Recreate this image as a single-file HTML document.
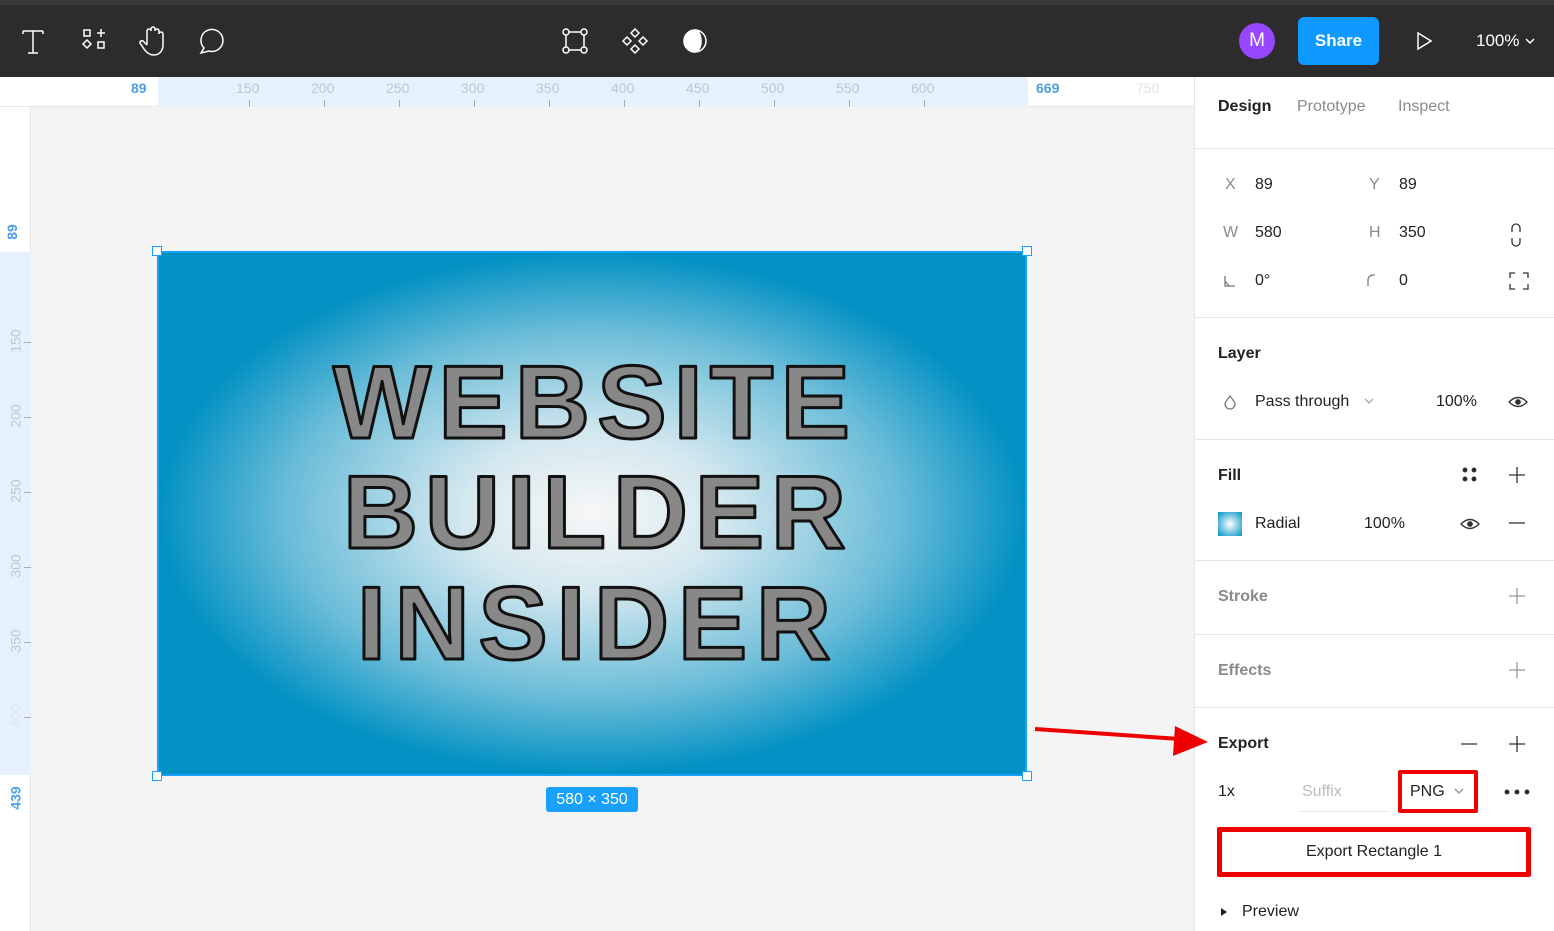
<!DOCTYPE html>
<html><head><meta charset="utf-8"><style>
*{margin:0;padding:0;box-sizing:border-box}
body{width:1554px;height:931px;overflow:hidden;position:relative;background:#f4f4f4;font-family:"Liberation Sans",sans-serif}
.a{position:absolute}
.t{position:absolute;font-size:16px;color:#222;white-space:nowrap;line-height:20px}
.g{color:#8a8a8a}
.sep{position:absolute;left:1194px;width:360px;height:1px;background:#e5e5e5}
.rl{position:absolute;font-size:14px;color:#c0c6cc;top:80px}
.tk{position:absolute;top:100px;width:1px;height:7px;background:#aab}
.vl{position:absolute;left:4px;font-size:14px;color:#c0c6cc;transform:rotate(-90deg);transform-origin:center}
.vt{position:absolute;left:24px;width:7px;height:1px;background:#aab}
</style></head><body>
<!-- top bar -->
<div class="a" style="left:0;top:0;width:1554px;height:77px;background:#2c2c2c"></div>
<div class="a" style="left:0;top:0;width:1554px;height:5px;background:#3a3a3a"></div>
<svg class="a" style="left:0;top:0" width="1554" height="77" fill="none" stroke="#fff" stroke-width="1.5">
<path d="M23 31h20M33 31v22M28 53h10M23 31v3M43 31v3"/>
<rect x="84" y="30" width="6" height="6"/><path d="M97 33h8M101 29v8"/><path d="M87 40l4 4-4 4-4-4z"/><rect x="98" y="42" width="6" height="6"/>
<path d="M147 45v-14a2 2 0 0 1 4 0v-2a2 2 0 0 1 4 0v2a2 2 0 0 1 4 0v3a2 2 0 0 1 4 0v11c0 6-4 10-9 10s-8-3-10-6l-4-6a2 2 0 0 1 3-2l4 4"/>
<path d="M201 53l3-5a11 11 0 1 1 5 3z"/>
<rect x="566" y="32" width="18" height="18"/><circle cx="566" cy="32" r="3" fill="#2c2c2c"/><circle cx="584" cy="32" r="3" fill="#2c2c2c"/><circle cx="566" cy="50" r="3" fill="#2c2c2c"/><circle cx="584" cy="50" r="3" fill="#2c2c2c"/>
<path d="M635 29l4 4-4 4-4-4zM627 37l4 4-4 4-4-4zM643 37l4 4-4 4-4-4zM635 45l4 4-4 4-4-4z"/>
<circle cx="695" cy="41" r="11"/><path d="M695 30A11 11 0 0 0 695 52A6 11 0 0 0 695 30z" fill="#fff"/>
<path d="M1418 33l13 8-13 8z"/><path d="M1526 39l4 4 4-4"/>
</svg>
<div class="a" style="left:1239px;top:23px;width:36px;height:36px;border-radius:50%;background:#9747ff;color:#fff;font-size:19px;text-align:center;line-height:36px">M</div>
<div class="a" style="left:1298px;top:17px;width:81px;height:48px;border-radius:6px;background:#0d99ff;color:#fff;font-size:17px;font-weight:bold;text-align:center;line-height:48px">Share</div>
<div class="t" style="left:1476px;top:31px;color:#fff;font-size:17px">100%</div>
<!-- rulers -->
<div class="a" style="left:0;top:77px;width:1194px;height:30px;background:#fff;border-bottom:1px solid #e5e5e5"></div>
<div class="a" style="left:158px;top:77px;width:870px;height:30px;background:#e5f2fd"></div>
<div class="a" style="left:0;top:107px;width:31px;height:824px;background:#fff;border-right:1px solid #e5e5e5"></div>
<div class="a" style="left:0;top:252px;width:31px;height:523px;background:#e5f2fd"></div>
<div class="rl" style="left:131px;color:#4a9fe6;font-weight:bold">89</div>
<div class="rl" style="left:236px">150</div><div class="rl" style="left:311px">200</div><div class="rl" style="left:386px">250</div><div class="rl" style="left:461px">300</div><div class="rl" style="left:536px">350</div><div class="rl" style="left:611px">400</div><div class="rl" style="left:686px">450</div><div class="rl" style="left:761px">500</div><div class="rl" style="left:836px">550</div><div class="rl" style="left:911px">600</div>
<div class="rl" style="left:1036px;color:#4a9fe6;font-weight:bold">669</div><div class="rl" style="left:1136px;color:#e0e4e8">750</div>
<div class="tk" style="left:249px"></div><div class="tk" style="left:324px"></div><div class="tk" style="left:399px"></div><div class="tk" style="left:474px"></div><div class="tk" style="left:549px"></div><div class="tk" style="left:624px"></div><div class="tk" style="left:699px"></div><div class="tk" style="left:774px"></div><div class="tk" style="left:849px"></div><div class="tk" style="left:924px"></div>
<div class="vl" style="top:224px;color:#4a9fe6;font-weight:bold">89</div>
<div class="vl" style="top:333px">150</div><div class="vl" style="top:408px">200</div><div class="vl" style="top:483px">250</div><div class="vl" style="top:558px">300</div><div class="vl" style="top:633px">350</div><div class="vl" style="top:708px;color:#e0e4e8">400</div>
<div class="vl" style="top:790px;color:#4a9fe6;font-weight:bold">439</div>
<div class="vt" style="top:342px"></div><div class="vt" style="top:417px"></div><div class="vt" style="top:492px"></div><div class="vt" style="top:567px"></div><div class="vt" style="top:642px"></div><div class="vt" style="top:717px"></div>
<!-- artwork -->
<div class="a" style="left:157px;top:251px;width:870px;height:525px;background:radial-gradient(ellipse 50% 50% at 50% 50%,#f7f7f7 0%,#d4e8ef 30%,#6cbdd8 70%,#0291c3 100%);border:2px solid #18a0fb"></div>
<svg class="a" style="left:157px;top:251px" width="870" height="525">
<g font-family="Liberation Sans,sans-serif" font-weight="bold" font-size="104" fill="#888" stroke="#111" stroke-width="3" stroke-linejoin="round">
<text x="176" y="187" textLength="517" lengthAdjust="spacing">WEBSITE</text>
<text x="186" y="297" textLength="503" lengthAdjust="spacing">BUILDER</text>
<text x="200" y="408" textLength="474" lengthAdjust="spacing">INSIDER</text>
</g></svg>
<div class="a" style="left:152px;top:246px;width:10px;height:10px;background:#fff;border:1.5px solid #18a0fb"></div>
<div class="a" style="left:1022px;top:246px;width:10px;height:10px;background:#fff;border:1.5px solid #18a0fb"></div>
<div class="a" style="left:152px;top:771px;width:10px;height:10px;background:#fff;border:1.5px solid #18a0fb"></div>
<div class="a" style="left:1022px;top:771px;width:10px;height:10px;background:#fff;border:1.5px solid #18a0fb"></div>
<div class="a" style="left:546px;top:787px;width:92px;height:25px;background:#18a0fb;border-radius:3px;color:#fff;font-size:16px;text-align:center;line-height:25px">580 × 350</div>
<!-- panel -->
<div class="a" style="left:1194px;top:77px;width:360px;height:854px;background:#fff;border-left:1px solid #e5e5e5"></div>
<div class="t" style="left:1218px;top:97px;font-weight:bold">Design</div>
<div class="t g" style="left:1297px;top:97px">Prototype</div>
<div class="t g" style="left:1398px;top:97px">Inspect</div>
<div class="sep" style="top:148px"></div>
<div class="t g" style="left:1225px;top:175px">X</div><div class="t" style="left:1255px;top:175px">89</div>
<div class="t g" style="left:1369px;top:175px">Y</div><div class="t" style="left:1399px;top:175px">89</div>
<div class="t g" style="left:1223px;top:223px">W</div><div class="t" style="left:1255px;top:223px">580</div>
<div class="t g" style="left:1369px;top:223px">H</div><div class="t" style="left:1399px;top:223px">350</div>
<div class="t" style="left:1255px;top:271px">0°</div><div class="t" style="left:1399px;top:271px">0</div>
<svg class="a" style="left:1194px;top:148px" width="360" height="783" fill="none" stroke="#333" stroke-width="1.3">
<path d="M318 84v-4a4 4 0 0 1 8 0v4M318 90v4a4 4 0 0 0 8 0v-4"/>
<path d="M316 130v-5h5M329 125h5v5M334 136v5h-5M321 141h-5v-5"/>
<path d="M31 128v10h10M31 133l4 5" stroke="#777"/>
<path d="M174 138v-6a5 5 0 0 1 5-5h2" stroke="#777"/>
<path d="M36 248c-3 4-5 6-5 8a5 5 0 0 0 10 0c0-2-2-4-5-8z" stroke="#777"/>
<path d="M171 251l4 4 4-4" stroke="#aaa"/>
<path d="M315 254q9-9 18 0q-9 9-18 0z"/><circle cx="324" cy="254" r="2.2" fill="#333"/>
<circle cx="271" cy="322" r="1.8" fill="#222"/><circle cx="280" cy="322" r="1.8" fill="#222"/><circle cx="271" cy="331" r="1.8" fill="#222"/><circle cx="280" cy="331" r="1.8" fill="#222"/>
<path d="M315 327h16M323 319v16"/>
<path d="M267 376q9-9 18 0q-9 9-18 0z"/><circle cx="276" cy="376" r="2.2" fill="#333"/>
<path d="M315 375h16"/>
<path d="M315 448h16M323 440v16M315 522h16M323 514v16" stroke="#999"/>
<path d="M267 596h16M315 596h16M323 588v16"/>
<path d="M261 641l4 4 4-4" stroke="#999" stroke-width="1.5"/>
<circle cx="313" cy="644" r="1.8" fill="#222"/><circle cx="323" cy="644" r="1.8" fill="#222"/><circle cx="333" cy="644" r="1.8" fill="#222"/>
<path d="M27 760l6 4-6 4z" fill="#222" stroke="none"/>
</svg>
<div class="sep" style="top:317px"></div>
<div class="t" style="left:1218px;top:344px;font-weight:bold">Layer</div>
<div class="t" style="left:1255px;top:392px">Pass through</div>
<div class="t" style="left:1436px;top:392px">100%</div>
<div class="sep" style="top:439px"></div>
<div class="t" style="left:1218px;top:466px;font-weight:bold">Fill</div>
<div class="a" style="left:1218px;top:512px;width:24px;height:24px;background:radial-gradient(circle,#fff 0%,#7cc9e4 50%,#0291c3 100%)"></div>
<div class="t" style="left:1255px;top:514px">Radial</div>
<div class="t" style="left:1364px;top:514px">100%</div>
<div class="sep" style="top:560px"></div>
<div class="t g" style="left:1218px;top:587px;font-weight:bold">Stroke</div>
<div class="sep" style="top:634px"></div>
<div class="t g" style="left:1218px;top:661px;font-weight:bold">Effects</div>
<div class="sep" style="top:707px"></div>
<div class="t" style="left:1218px;top:734px;font-weight:bold">Export</div>
<div class="t" style="left:1218px;top:782px">1x</div>
<div class="t" style="left:1302px;top:782px;color:#bbb">Suffix</div>
<div class="a" style="left:1300px;top:811px;width:88px;height:1px;background:#e5e5e5"></div>
<div class="a" style="left:1398px;top:770px;width:80px;height:43px;border:4px solid #e00;border-radius:2px"></div>
<div class="t" style="left:1410px;top:782px">PNG</div>
<div class="a" style="left:1217px;top:827px;width:314px;height:50px;border:5px solid #e00;border-radius:2px"></div>
<div class="t" style="left:1217px;top:842px;width:314px;text-align:center">Export Rectangle 1</div>
<div class="t" style="left:1242px;top:902px">Preview</div>
<svg class="a" style="left:1030px;top:720px" width="180" height="40"><path d="M5 9L150 19" stroke="#e00" stroke-width="4"/><path d="M145 6L178 22L143 36z" fill="#e00"/></svg>
</body></html>
